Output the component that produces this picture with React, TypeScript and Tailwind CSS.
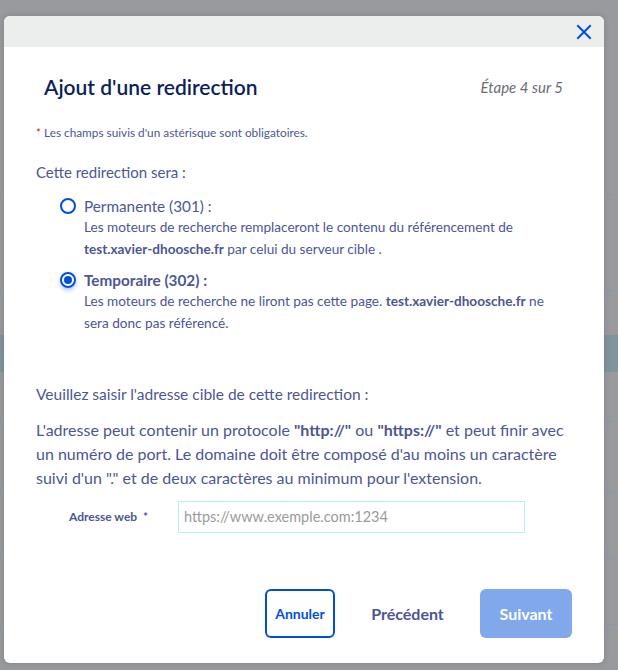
import React from "react";

export default function App() {
  return (
    <div className="relative w-[618px] h-[670px] overflow-hidden bg-[#999a9d]" style={{ fontFamily: "Lato, 'Open Sans', sans-serif" }}>
      {/* underlying page */}
      <div className="flex flex-col w-full h-full">
        <div className="h-[194px]" />
        <div className="h-px bg-[#8f999f]" />
        <div className="h-[95px]" />
        <div className="h-px bg-[#7fa0ab]" />
        <div className="h-[44px]" />
        <div className="h-[37px] bg-[#7f949d]" />
        <div className="h-[49px]" />
        <div className="h-px bg-[#7fa0ab]" />
        <div className="h-[70px]" />
        <div className="h-px bg-[#7fa0ab]" />
        <div className="h-[65px]" />
        <div className="h-px bg-[#7fa0ab]" />
        <div className="h-[65px]" />
        <div className="h-px bg-[#7fa0ab]" />
      </div>

      {/* modal */}
      <div className="absolute left-[4px] top-[16px] w-[600px] h-[647px] bg-white rounded-[6px] overflow-hidden flex flex-col shadow-[0_0_6px_rgba(0,0,0,0.15)]">
        <div className="h-[31px] bg-[#ebeeec] flex items-center justify-end pr-[12px] shrink-0">
          <svg width="16" height="16" viewBox="0 0 16 16" className="mt-[1px]">
            <path d="M2 2 L14 14 M14 2 L2 14" stroke="#0050d7" strokeWidth="2" strokeLinecap="square" />
          </svg>
        </div>
        <div className="flex flex-col px-[32px] text-[#4d5693]">
          <div className="flex items-center justify-between pt-[26px] pl-[8px] pr-[9px]">
            <h1 className="text-[21px] font-semibold text-[#0b1f5c] leading-[28px]">Ajout d'une redirection</h1>
            <span className="italic text-[15px] text-[#6c6c72]">Étape 4 sur 5</span>
          </div>
          <p className="mt-[24px] text-[11.8px] leading-[16px]"><span className="text-[#e01e1e]">*</span> Les champs suivis d'un astérisque sont obligatoires.</p>
          <p className="mt-[20px] text-[15px] leading-[22px]">Cette redirection sera :</p>

          <div className="mt-[13px] pl-[24px] flex flex-col gap-[10px]">
            <div className="flex gap-[8px]">
              <div className="w-[16px] h-[16px] rounded-full border-2 border-[#0050d7] mt-[2px] shrink-0" />
              <div className="flex flex-col whitespace-nowrap">
                <span className="text-[15.3px] leading-[20px]">Permanente (301) :</span>
                <span className="text-[13.6px] leading-[22px]">Les moteurs de recherche remplaceront le contenu du référencement de</span>
                <span className="text-[13.6px] leading-[22px]"><b className="font-bold">test.xavier-dhoosche.fr</b> par celui du serveur cible .</span>
              </div>
            </div>
            <div className="flex gap-[8px]">
              <div className="w-[16px] h-[16px] rounded-full border-2 border-[#0050d7] mt-[2px] shrink-0 flex items-center justify-center shadow-[0_2px_4px_rgba(0,80,215,0.35)]">
                <div className="w-[8px] h-[8px] rounded-full bg-[#0050d7]" />
              </div>
              <div className="flex flex-col whitespace-nowrap">
                <span className="text-[15.3px] leading-[20px] font-bold">Temporaire (302) :</span>
                <span className="text-[13.6px] leading-[22px]">Les moteurs de recherche ne liront pas cette page. <b className="font-bold">test.xavier-dhoosche.fr</b> ne</span>
                <span className="text-[13.6px] leading-[22px]">sera donc pas référencé.</span>
              </div>
            </div>
          </div>

          <p className="mt-[48px] text-[15.5px] leading-[24px]">Veuillez saisir l'adresse cible de cette redirection :</p>
          <div className="mt-[12px] flex flex-col text-[16px] leading-[24px] whitespace-nowrap">
            <span>L'adresse peut contenir un protocole <b className="font-bold">"http://"</b> ou <b className="font-bold">"https://"</b> et peut finir avec</span>
            <span>un numéro de port. Le domaine doit être composé d'au moins un caractère</span>
            <span>suivi d'un "." et de deux caractères au minimum pour l'extension.</span>
          </div>

          <div className="mt-[11px] flex items-center">
            <label className="w-[142px] pl-[33px] text-[12px] font-bold text-[#4d5693]">Adresse web&nbsp; *</label>
            <div className="w-[347px] h-[32px] border border-[#b8ecf7] flex items-center pl-[5px] text-[14.5px] text-[#9a9a9a]">https://www.exemple.com:1234</div>
          </div>

          <div className="mt-[56px] flex items-center justify-end">
            <button className="w-[70px] h-[49px] border-2 border-[#0050d7] rounded-[6px] text-[14px] font-bold text-[#0050d7]">Annuler</button>
            <button className="w-[145px] h-[49px] text-[16px] font-bold text-[#4d5693]">Précédent</button>
            <button className="w-[92px] h-[49px] rounded-[6px] bg-[#80a8ea] text-[16px] font-bold text-white">Suivant</button>
          </div>
        </div>
      </div>
    </div>
  );
}
